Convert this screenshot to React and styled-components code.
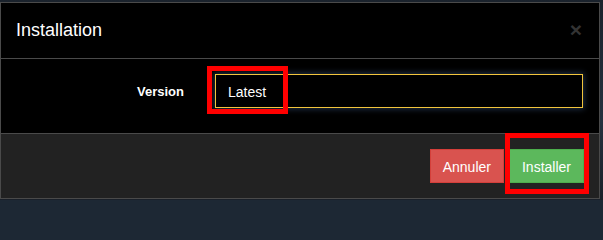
import React from 'react';
import styled, { createGlobalStyle } from 'styled-components';

const GlobalStyle = createGlobalStyle`
  html, body {
    margin: 0;
    padding: 0;
    background: #1d2834;
    font-family: "Liberation Sans", Arial, sans-serif;
  }
`;

const Page = styled.div`
  width: 603px;
  height: 200px;
  padding-top: 2px;
  box-sizing: border-box;
  overflow: hidden;
  background: linear-gradient(180deg, #1a222c 0%, #25313f 60%, #1a2029 100%);
`;

const Dialog = styled.div`
  width: 600px;
  height: 197px;
  box-sizing: border-box;
  border: 1px solid #4a4a4a;
  background: #000;
  display: flex;
  flex-direction: column;
`;

const Header = styled.header`
  height: 56px;
  box-sizing: border-box;
  padding: 0 15px;
  border-bottom: 1px solid #4a4a4a;
  display: flex;
  align-items: center;
  justify-content: space-between;
`;

const Title = styled.h4`
  margin: 0;
  color: #fff;
  font-size: 18px;
  font-weight: normal;
  line-height: 1;
  padding-bottom: 2px;
`;

const Close = styled.span`
  color: #333;
  font-size: 21px;
  font-weight: bold;
  line-height: 1;
  margin-right: 2px;
  margin-bottom: 2px;
`;

const Body = styled.div`
  height: 75px;
  box-sizing: border-box;
  padding: 15px 15px 0 15px;
  border-bottom: 1px solid #4a4a4a;
`;

const FormRow = styled.div`
  display: grid;
  grid-template-columns: 168px 368px;
  column-gap: 31px;
  align-items: center;
`;

const Label = styled.label`
  color: #fff;
  font-size: 13px;
  font-weight: bold;
  text-align: right;
  padding-top: 1px;
`;

const Field = styled.div`
  position: relative;
`;

const Input = styled.div`
  height: 34px;
  box-sizing: border-box;
  border: 1px solid #f2c53d;
  box-shadow: 0 0 6px 1px rgba(60, 90, 130, 0.55);
  color: #fff;
  font-size: 14px;
  padding: 0 12px;
  display: flex;
  align-items: center;
  padding-top: 2px;
`;

const Highlight = styled.div`
  position: absolute;
  left: ${p => p.$left}px;
  top: ${p => p.$top}px;
  width: ${p => p.$width}px;
  height: ${p => p.$height}px;
  box-sizing: border-box;
  border: 5px solid #ff0000;
  pointer-events: none;
`;

const Footer = styled.footer`
  flex: 1;
  background: #222;
  padding: 15px 15px 0 15px;
  display: flex;
  justify-content: flex-end;
  align-items: flex-start;
  gap: 5px;
`;

const ButtonWrap = styled.div`
  position: relative;
`;

const Button = styled.button`
  height: 34px;
  padding: 0 12px;
  font-family: "Liberation Sans", Arial, sans-serif;
  font-size: 14px;
  color: #fff;
  border: 1px solid ${p => (p.$variant === 'danger' ? '#d43f3a' : '#4cae4c')};
  background: ${p => (p.$variant === 'danger' ? '#d9534f' : '#5cb85c')};
  border-radius: 0;
  cursor: pointer;
  padding-top: 1px;
`;

export default function App() {
  return (
    <Page>
      <GlobalStyle />
      <Dialog>
        <Header>
          <Title>Installation</Title>
          <Close>×</Close>
        </Header>
        <Body>
          <FormRow>
            <Label>Version</Label>
            <Field>
              <Input>Latest</Input>
              <Highlight $left={-8} $top={-8} $width={81} $height={48} />
            </Field>
          </FormRow>
        </Body>
        <Footer>
          <Button $variant="danger">Annuler</Button>
          <ButtonWrap>
            <Button $variant="success">Installer</Button>
            <Highlight $left={-4} $top={-16} $width={84} $height={61} />
          </ButtonWrap>
        </Footer>
      </Dialog>
    </Page>
  );
}
